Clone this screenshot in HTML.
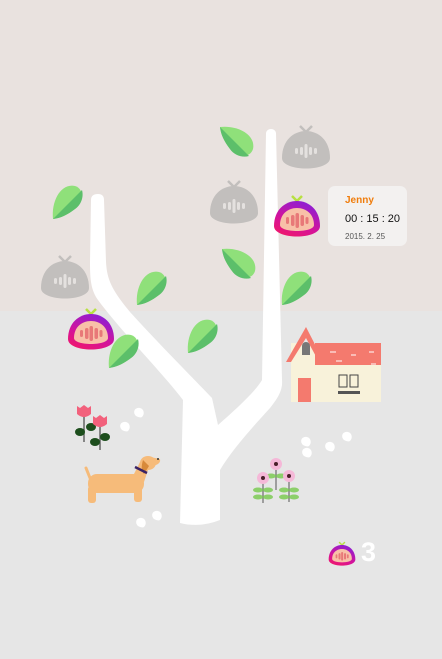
<!DOCTYPE html>
<html><head><meta charset="utf-8"><style>
html,body{margin:0;padding:0}
body{width:442px;height:659px;position:relative;overflow:hidden;background:#e6e6e6;font-family:"Liberation Sans",sans-serif}
.top{position:absolute;left:0;top:0;width:442px;height:311px;background:#e9e2df}
svg{position:absolute;left:0;top:0}
.card{position:absolute;left:328px;top:186px;width:79px;height:60px;background:#f3f1f0;border-radius:7px}
.card .n{position:absolute;left:17px;top:9px;color:#f07d0c;font-weight:bold;font-size:10px}
.card .t{position:absolute;left:17px;top:27px;color:#111;font-size:11px}
.card .d{position:absolute;left:17px;top:46px;color:#555;font-size:8px}
.three{position:absolute;left:361px;top:537px;color:#fff;font-size:27px;font-weight:bold}
</style></head><body>
<div class="top"></div>
<svg width="442" height="659" viewBox="0 0 442 659">
<defs>
<g id="leaf"><path d="M0,0 C18,-2 36,8 33,22 C30,32 16,30 10,22 C4,14 1,8 0,0Z" fill="#8fe07a"/><path d="M0,0 L29,29 C22,31 14,28 10,22 C4,14 1,8 0,0Z" fill="#5cbf6a"/></g>
<g id="bag"><path d="M-6,-24 L0,-18 L6,-24" stroke="#c2bfbd" stroke-width="2.5" fill="none"/><path d="M-24,8 C-24,-10 -12,-19 0,-19 C12,-19 24,-10 24,8 C24,22 -24,22 -24,8Z" fill="#c2bfbd"/><g fill="#e4e1df"><rect x="-11" y="-2" width="3" height="6" rx="1.5"/><rect x="-6" y="-3" width="3" height="8" rx="1.5"/><rect x="-1.5" y="-6" width="3" height="14" rx="1.5"/><rect x="3" y="-3" width="3" height="8" rx="1.5"/><rect x="8" y="-2" width="3" height="6" rx="1.5"/></g></g>
<linearGradient id="rg" x1="0.7" y1="0" x2="0.2" y2="1"><stop offset="0" stop-color="#8a1fd6"/><stop offset="0.6" stop-color="#d4139a"/><stop offset="1" stop-color="#f0186a"/></linearGradient>
<g id="fruit"><path d="M-5,-24 L0,-19 L5,-24" stroke="#b8e043" stroke-width="2.5" fill="none"/><path d="M-23,6 C-23,-10 -12,-19 0,-19 C12,-19 23,-10 23,6 C23,20 -23,20 -23,6Z" fill="url(#rg)"/><path d="M-17,5 C-17,-6 -9,-12 0,-12 C9,-12 17,-6 17,5 C17,13 -17,13 -17,5Z" fill="#f8c0a8"/><g fill="#e87878"><rect x="-11" y="-3" width="3" height="7" rx="1.5"/><rect x="-6" y="-5" width="3.5" height="11" rx="1.7"/><rect x="-1.5" y="-7" width="3.5" height="15" rx="1.7"/><rect x="3.5" y="-5" width="3.5" height="11" rx="1.7"/><rect x="8.5" y="-3" width="3" height="7" rx="1.5"/></g></g>
<g id="paw"><path d="M0,0 c-4,-4 -1,-9 4,-8 c4,1 5,6 2,9 c-2,1 -4,0 -6,-1z" fill="#fff"/></g>
</defs>
<!-- tree -->
<path d="M180,523 L183,400 C160,370 120,330 98,300 C91,290 90,280 90,262 L91,200 Q91,194 98,194 Q104,194 104,200 L106,262 C107,280 112,290 130,312 C160,345 190,375 212,398 L218,425 C235,410 255,392 262,380 L266,133 Q267,129 271,129 Q275,129 276,133 L282,380 C283,390 278,398 270,408 C250,430 232,450 220,470 L220,520 Q200,528 180,523Z" fill="#fff"/>
<use href="#leaf" transform="translate(220,127)"/>
<use href="#leaf" transform="translate(222,249)"/>
<use href="#leaf" transform="translate(53,219) rotate(-90)"/>
<use href="#leaf" transform="translate(137,305) rotate(-90)"/>
<use href="#leaf" transform="translate(282,305) rotate(-90)"/>
<use href="#leaf" transform="translate(188,353) rotate(-90)"/>
<use href="#leaf" transform="translate(109,368) rotate(-90)"/>
<use href="#bag" transform="translate(306,150)"/>
<use href="#bag" transform="translate(234,205)"/>
<use href="#bag" transform="translate(65,280)"/>
<use href="#fruit" transform="translate(297,220)"/>
<use href="#fruit" transform="translate(91,333)"/>
<use href="#fruit" transform="translate(342,556) scale(0.58)"/>
<!-- house -->
<rect x="291" y="343" width="90" height="59" fill="#f8f2da"/>
<polygon points="315,343 381,343 381,365 315,365" fill="#f47a6e"/>
<polygon points="286,362 306,327 324,362 319,362 306,338 291,362" fill="#f47a6e"/>
<path d="M302,355 v-9 a4,4 0 0 1 8,0 v9z" fill="#777"/>
<rect x="298" y="378" width="13" height="24" fill="#f47a6e"/>
<rect x="339" y="375" width="8" height="12" fill="none" stroke="#444" stroke-width="1"/>
<rect x="350" y="375" width="8" height="12" fill="none" stroke="#444" stroke-width="1"/>
<rect x="338" y="391" width="22" height="3" fill="#555"/>
<g stroke="#fff" stroke-width="1"><path d="M330,352h6M351,355h5M369,352h5M336,361h6M371,364h5"/></g>
<!-- tulips -->
<g><path d="M84,410v32M100,418v32" stroke="#666" stroke-width="1.5"/>
<ellipse cx="80" cy="432" rx="5" ry="4" fill="#1d4e1d"/><ellipse cx="91" cy="427" rx="5" ry="4" fill="#1d4e1d"/>
<ellipse cx="95" cy="442" rx="5" ry="4" fill="#1d4e1d"/><ellipse cx="105" cy="437" rx="5" ry="4" fill="#1d4e1d"/>
<path d="M77,406 l3,2 l4,-3 l4,3 l3,-2 v8 q-7,6 -14,0z" fill="#f2617c"/>
<path d="M93,416 l3,2 l4,-3 l4,3 l3,-2 v8 q-7,6 -14,0z" fill="#f2617c"/></g>
<!-- daisies -->
<g stroke="#555" stroke-width="1"><path d="M263,478v25M276,465v25M289,477v25"/></g>
<g fill="#8ccf6a"><ellipse cx="258" cy="490" rx="5" ry="2.5"/><ellipse cx="268" cy="490" rx="5" ry="2.5"/><ellipse cx="258" cy="497" rx="5" ry="2.5"/><ellipse cx="268" cy="497" rx="5" ry="2.5"/><ellipse cx="271" cy="476" rx="5" ry="2.5"/><ellipse cx="281" cy="476" rx="5" ry="2.5"/><ellipse cx="284" cy="490" rx="5" ry="2.5"/><ellipse cx="294" cy="490" rx="5" ry="2.5"/><ellipse cx="284" cy="497" rx="5" ry="2.5"/><ellipse cx="294" cy="497" rx="5" ry="2.5"/></g>
<g fill="#f5b8d8"><circle cx="263" cy="478" r="6"/><circle cx="276" cy="464" r="6"/><circle cx="289" cy="476" r="6"/></g>
<g fill="#4a1f2a"><circle cx="263" cy="478" r="2"/><circle cx="276" cy="464" r="2"/><circle cx="289" cy="476" r="2"/></g>
<!-- dog -->
<g fill="#f6bb7a">
<path d="M90,478 L86,468" stroke="#f6bb7a" stroke-width="3" stroke-linecap="round"/>
<rect x="88" y="474" width="56" height="19" rx="9"/>
<rect x="88" y="486" width="8" height="17" rx="3"/>
<rect x="134" y="486" width="8" height="16" rx="3"/>
<path d="M132,478 L140,462 L150,464 L144,482Z"/>
<ellipse cx="148" cy="463" rx="8" ry="7"/>
<path d="M150,457 L160,459 Q161,463 156,465 L150,466Z"/>
</g>
<path d="M143,460 Q140,470 144,474 L149,466Z" fill="#d88a3a"/>
<circle cx="158" cy="459" r="1" fill="#333"/>
<path d="M135,467 l12,6" stroke="#3a2366" stroke-width="2.5"/>
<!-- paws -->
<use href="#paw" transform="translate(122,430)"/><use href="#paw" transform="translate(136,416)"/>
<use href="#paw" transform="translate(138,526)"/><use href="#paw" transform="translate(154,519)"/>
<use href="#paw" transform="translate(303,445)"/><use href="#paw" transform="translate(304,456)"/>
<use href="#paw" transform="translate(327,450)"/><use href="#paw" transform="translate(344,440)"/>
</svg>
<div class="card"><div class="n">Jenny</div><div class="t">00 : 15 : 20</div><div class="d">2015. 2. 25</div></div>
<div class="three">3</div>
</body></html>
